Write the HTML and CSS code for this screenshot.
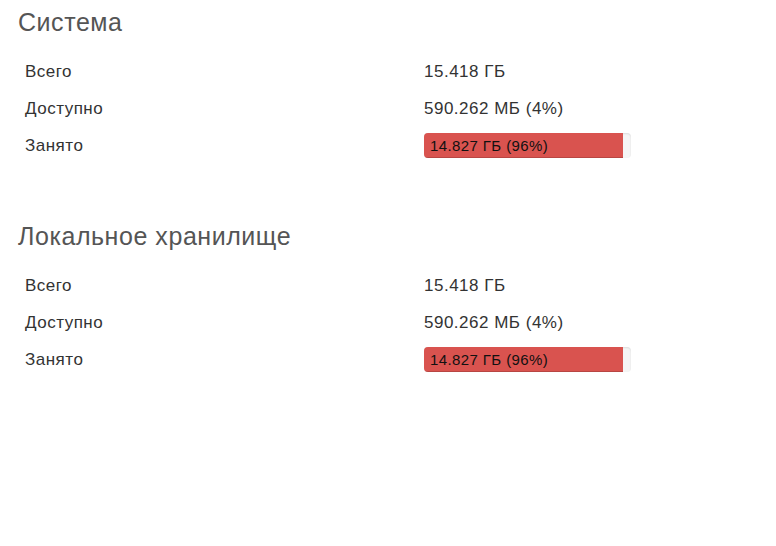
FILE: index.html
```html
<!DOCTYPE html>
<html lang="ru">
<head>
<meta charset="utf-8">
<title>Хранилище</title>
<link rel="stylesheet" href="styles.css">
</head>
<body>
<div class="page">
  <section class="storage">
    <h3 class="storage-title">Система</h3>
    <div class="stats">
      <div class="stat-label">Всего</div>
      <div class="stat-value">15.418 ГБ</div>
      <div class="stat-label">Доступно</div>
      <div class="stat-value">590.262 МБ (4%)</div>
      <div class="stat-label">Занято</div>
      <div class="stat-value">
        <div class="progress">
          <div class="progress-bar" style="width: 96%">14.827 ГБ (96%)</div>
        </div>
      </div>
    </div>
  </section>

  <section class="storage">
    <h3 class="storage-title">Локальное хранилище</h3>
    <div class="stats">
      <div class="stat-label">Всего</div>
      <div class="stat-value">15.418 ГБ</div>
      <div class="stat-label">Доступно</div>
      <div class="stat-value">590.262 МБ (4%)</div>
      <div class="stat-label">Занято</div>
      <div class="stat-value">
        <div class="progress">
          <div class="progress-bar" style="width: 96%">14.827 ГБ (96%)</div>
        </div>
      </div>
    </div>
  </section>
</div>
</body>
</html>
```

FILE: styles.css
```css
html, body {
  margin: 0;
  padding: 0;
  background: #fff;
}

body {
  font-family: "Liberation Sans", Arial, sans-serif;
  color: #333;
  font-size: 17px;
}

.page {
  padding: 9px 17px 0 18px;
  display: flex;
  flex-direction: column;
  gap: 59px;
}

.storage-title {
  margin: 0 0 18px 0;
  font-size: 25px;
  font-weight: 400;
  line-height: 26px;
  letter-spacing: 0.55px;
  color: #555;
}

.stats {
  display: grid;
  grid-template-columns: 399px 1fr;
  grid-auto-rows: 37px;
}

.stat-label,
.stat-value {
  display: flex;
  align-items: center;
  padding: 0 7px;
  font-size: 17px;
  letter-spacing: 0.5px;
}

.progress {
  width: 207px;
  height: 25px;
  background: #f5f5f5;
  border-radius: 4px;
  box-shadow: inset 0 1px 2px rgba(0, 0, 0, 0.1);
  overflow: hidden;
  display: flex;
  letter-spacing: 0;
}

.progress-bar {
  background: #d9534f;
  box-shadow: inset 0 -1px 0 rgba(0, 0, 0, 0.15);
  color: #111;
  font-size: 15px;
  letter-spacing: 0.4px;
  line-height: 25px;
  padding-left: 6px;
  box-sizing: border-box;
  white-space: nowrap;
}
```
